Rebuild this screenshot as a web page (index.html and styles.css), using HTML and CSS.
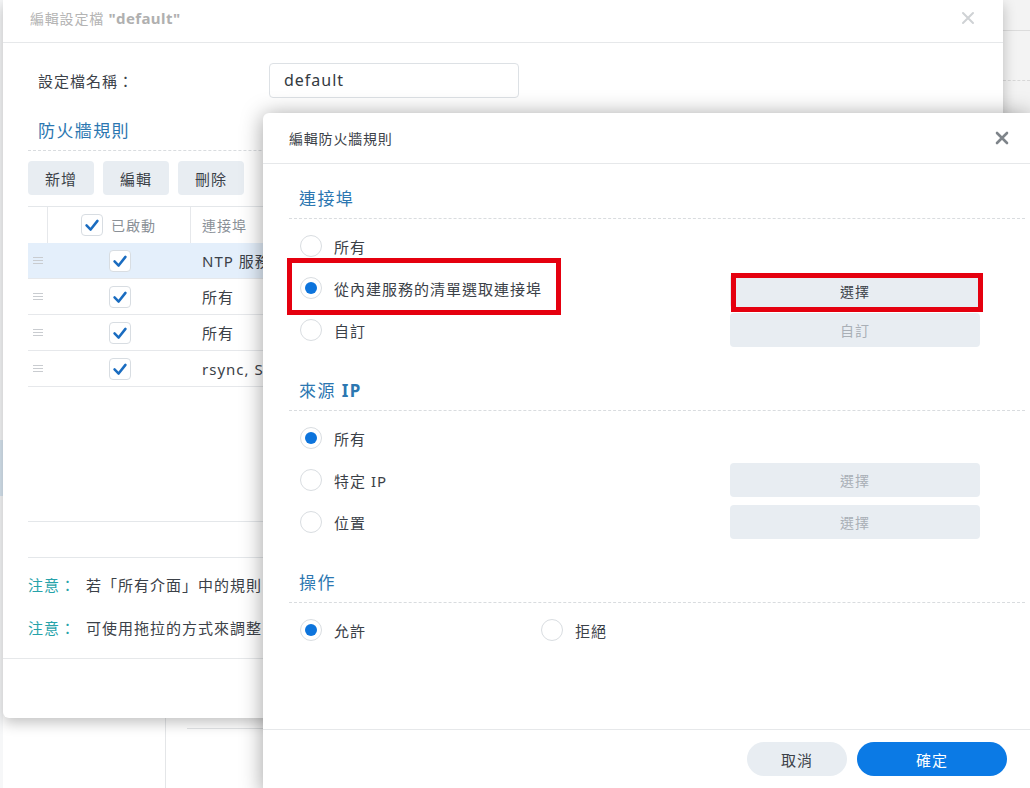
FILE: index.html
```html
<!DOCTYPE html>
<html lang="zh-Hant">
<head>
<meta charset="utf-8">
<title>編輯防火牆規則</title>
<link rel="stylesheet" href="styles.css">
</head>
<body>
<div class="desktop">
  <div class="bg-edge-left"><span class="bg-tint"></span></div>
  <div class="bg-edge-right"><span class="bg-line"></span><span class="bg-dash"></span></div>
  <div class="bg-lower"><span class="bg-hline"></span></div>

  <section class="dlg back">
    <header class="dlg-head back-head">
      <div class="back-title">編輯設定檔 <b>"default"</b></div>
      <svg class="x-icon light" viewBox="0 0 14 14" width="14" height="14"><path d="M2 2 L12 12 M12 2 L2 12"/></svg>
    </header>
    <div class="back-body">
      <div class="form-row">
        <label class="form-label">設定檔名稱：</label>
        <div class="text-input">default</div>
      </div>
      <div class="sec-title">防火牆規則</div>
      <div class="toolbar">
        <button class="tool-btn">新增</button>
        <button class="tool-btn">編輯</button>
        <button class="tool-btn">刪除</button>
      </div>
      <div class="grid">
        <div class="grid-row grid-head">
          <div class="c-drag"></div>
          <div class="c-check head-check"><span class="cb"><svg viewBox="0 0 22 22"><path d="M5 11.5 L9.5 16 L17 6.5"/></svg></span><span>已啟動</span></div>
          <div class="c-port">連接埠</div>
        </div>
        <div class="grid-row sel">
          <div class="c-drag"><span class="handle"></span></div>
          <div class="c-check"><span class="cb"><svg viewBox="0 0 22 22"><path d="M5 11.5 L9.5 16 L17 6.5"/></svg></span></div>
          <div class="c-port">NTP 服務</div>
        </div>
        <div class="grid-row">
          <div class="c-drag"><span class="handle"></span></div>
          <div class="c-check"><span class="cb"><svg viewBox="0 0 22 22"><path d="M5 11.5 L9.5 16 L17 6.5"/></svg></span></div>
          <div class="c-port">所有</div>
        </div>
        <div class="grid-row">
          <div class="c-drag"><span class="handle"></span></div>
          <div class="c-check"><span class="cb"><svg viewBox="0 0 22 22"><path d="M5 11.5 L9.5 16 L17 6.5"/></svg></span></div>
          <div class="c-port">所有</div>
        </div>
        <div class="grid-row">
          <div class="c-drag"><span class="handle"></span></div>
          <div class="c-check"><span class="cb"><svg viewBox="0 0 22 22"><path d="M5 11.5 L9.5 16 L17 6.5"/></svg></span></div>
          <div class="c-port">rsync, SSH</div>
        </div>
      </div>
      <div class="pager"></div>
      <p class="note first"><span class="note-key">注意：</span>若「所有介面」中的規則</p>
      <p class="note"><span class="note-key">注意：</span>可使用拖拉的方式來調整</p>
    </div>
    <footer class="back-foot"></footer>
  </section>

  <section class="dlg front">
    <header class="dlg-head front-head">
      <div class="front-title">編輯防火牆規則</div>
      <svg class="x-icon dark" viewBox="0 0 14 14" width="14" height="14"><path d="M2 2 L12 12 M12 2 L2 12"/></svg>
    </header>
    <div class="front-body">
      <div class="sec-title">連接埠</div>
      <div class="opts">
        <div class="opt-row">
          <label class="radio-label"><span class="radio"></span>所有</label>
        </div>
        <div class="opt-row">
          <label class="radio-label"><span class="radio on"></span>從內建服務的清單選取連接埠</label>
          <button class="wide-btn active nudge">選擇</button>
        </div>
        <div class="opt-row">
          <label class="radio-label"><span class="radio"></span>自訂</label>
          <button class="wide-btn">自訂</button>
        </div>
      </div>

      <div class="sec-title next">來源 <b>IP</b></div>
      <div class="opts">
        <div class="opt-row">
          <label class="radio-label"><span class="radio on"></span>所有</label>
        </div>
        <div class="opt-row">
          <label class="radio-label"><span class="radio"></span>特定 IP</label>
          <button class="wide-btn">選擇</button>
        </div>
        <div class="opt-row">
          <label class="radio-label"><span class="radio"></span>位置</label>
          <button class="wide-btn">選擇</button>
        </div>
      </div>

      <div class="sec-title next">操作</div>
      <div class="opts">
        <div class="opt-row">
          <label class="radio-label short"><span class="radio on"></span>允許</label>
          <label class="radio-label"><span class="radio"></span>拒絕</label>
        </div>
      </div>
    </div>
    <footer class="front-foot">
      <button class="pill cancel">取消</button>
      <button class="pill ok">確定</button>
    </footer>
    <span class="mark mark-radio"></span>
    <span class="mark mark-btn"></span>
  </section>
</div>
</body>
</html>
```

FILE: styles.css
```css
* { box-sizing: border-box; }

html, body {
  margin: 0;
  padding: 0;
}

body {
  width: 1030px;
  height: 788px;
  overflow: hidden;
  background: #ffffff;
  font-family: "Noto Sans", "Noto Sans CJK TC", sans-serif;
  font-size: 15px;
  letter-spacing: 1px;
  color: #3b4148;
}

.desktop {
  position: relative;
  width: 1030px;
  height: 788px;
  overflow: hidden;
  background: #fff;
}

/* background remnants */
.bg-edge-left {
  position: absolute;
  left: 0;
  top: 0;
  width: 3px;
  height: 788px;
  background: #f6f7f8;
}
.bg-tint {
  display: block;
  margin-top: 440px;
  height: 56px;
  background: #d7e5f0;
}
.bg-edge-right {
  position: absolute;
  left: 1003px;
  top: 0;
  width: 27px;
  height: 120px;
  background: #f3f3f3;
}
.bg-line {
  display: block;
  margin-top: 30px;
  border-top: 1px solid #dcdcdc;
}
.bg-dash {
  display: block;
  margin-top: 49px;
  border-top: 1px dashed #d8d8d8;
}
.bg-lower {
  position: absolute;
  left: 165px;
  top: 700px;
  width: 200px;
  height: 100px;
  border-left: 1px solid #e4e6e8;
  padding: 28px 0 0 21px;
}
.bg-hline {
  display: block;
  border-top: 1px solid #e2e4e6;
}

/* dialogs */
.dlg {
  position: absolute;
  background: #fff;
  display: flex;
  flex-direction: column;
}

.back {
  left: 3px;
  top: 0;
  width: 1000px;
  height: 718px;
  border-radius: 0 0 6px 6px;
  box-shadow: 0 5px 14px rgba(0, 0, 0, 0.24);
}

.dlg-head {
  display: flex;
  align-items: center;
  justify-content: space-between;
  border-bottom: 1px solid #e6e8ea;
  flex: none;
}

.back-head {
  height: 43px;
  padding: 0 28px 0 27px;
}
.back-title {
  font-size: 14px;
  letter-spacing: 0.8px;
  color: #b4b4b4;
  margin-top: -6px;
}
.back-title b {
  font-weight: 700;
  font-size: 15px;
  letter-spacing: 0.4px;
  color: #b0b0b0;
}

.x-icon path {
  fill: none;
  stroke-linecap: round;
}
.x-icon.light path {
  stroke: #cfd2d5;
  stroke-width: 2;
}
.x-icon.dark path {
  stroke: #7e848a;
  stroke-width: 2.6;
}
.back-head .x-icon {
  margin-top: -6px;
}

.back-body {
  flex: 1;
  padding: 20px 0 0 25px;
  overflow: hidden;
}

.form-row {
  display: flex;
  align-items: center;
  height: 35px;
  padding-left: 10px;
}
.form-label {
  width: 231px;
  color: #3b4148;
}
.text-input {
  width: 250px;
  height: 35px;
  border: 1px solid #dde1e5;
  border-radius: 4px;
  padding: 0 14px;
  line-height: 33px;
  font-size: 16px;
  color: #333a41;
}

.sec-title {
  padding: 20px 0 6px 10px;
  line-height: 26px;
  font-size: 17px;
  letter-spacing: 1.4px;
  color: #2c77b1;
  border-bottom: 1px dashed #d9dcdf;
}
.sec-title b {
  font-weight: 700;
}

.toolbar {
  display: flex;
  gap: 9px;
  margin-top: 10px;
}
.tool-btn {
  width: 66px;
  height: 34px;
  border: none;
  border-radius: 4px;
  background: #e8edf2;
  font: inherit;
  letter-spacing: 1px;
  color: #3b4148;
  padding: 0;
}

.grid {
  margin-top: 11px;
  height: 316px;
  border-top: 1px solid #e4e7ea;
  border-bottom: 1px solid #e4e7ea;
}
.grid-row {
  display: flex;
  align-items: center;
  height: 36px;
  border-bottom: 1px solid #e6e8eb;
}
.grid-head {
  height: 36px;
  border-bottom: none;
  color: #8a9097;
  font-size: 14px;
}
.grid-row.sel {
  background: #e4effb;
}
.c-drag {
  width: 20px;
  height: 100%;
  display: flex;
  align-items: center;
  justify-content: center;
}
.c-check {
  width: 143px;
  height: 100%;
  display: flex;
  align-items: center;
  justify-content: center;
}
.grid-head .c-drag {
  border-right: 1px solid #e6e8eb;
}
.grid-head .c-check {
  border-right: 1px solid #e6e8eb;
  justify-content: flex-start;
  padding-left: 33px;
  gap: 8px;
}
.c-port {
  padding-left: 11px;
  white-space: nowrap;
}

.handle {
  display: block;
  width: 10px;
  height: 7px;
  border-top: 1px solid #c9ccd0;
  border-bottom: 1px solid #c9ccd0;
  position: relative;
}
.handle::after {
  content: "";
  position: absolute;
  left: 0;
  right: 0;
  top: 2px;
  border-top: 1px solid #c9ccd0;
}

.cb {
  width: 22px;
  height: 22px;
  border: 1px solid #d8dde2;
  border-radius: 4px;
  background: #fff;
  display: inline-flex;
}
.cb svg {
  width: 20px;
  height: 20px;
}
.cb path {
  fill: none;
  stroke: #1a6cc0;
  stroke-width: 2.8;
  stroke-linecap: round;
  stroke-linejoin: round;
}

.pager {
  height: 36px;
  border-bottom: 1px solid #e4e7ea;
}

.note {
  margin: 16px 0 0;
  line-height: 22px;
  white-space: nowrap;
  color: #3b4148;
}
.note + .note {
  margin-top: 21px;
}
.note-key {
  color: #27a3aa;
  margin-right: 10px;
}

.back-foot {
  flex: none;
  height: 60px;
  border-top: 1px solid #e6e8ea;
}

/* front dialog */
.front {
  left: 263px;
  top: 113px;
  width: 767px;
  height: 680px;
  border-radius: 6px 0 0 0;
  box-shadow: 0 2px 22px rgba(0, 0, 0, 0.38);
}

.front-head {
  height: 51px;
  padding: 0 21px 0 26px;
}
.front-title {
  font-size: 14px;
  letter-spacing: 0.8px;
  color: #3b4148;
}

.front-body {
  flex: 1;
  padding: 0 5px 0 26px;
}
.front-body .sec-title {
  padding-top: 22px;
}
.front-body .sec-title.next {
  padding-top: 27px;
}

.opts {
  padding: 6px 0 0 11px;
}
.opt-row {
  display: flex;
  align-items: center;
  height: 42px;
}
.radio-label {
  display: flex;
  align-items: center;
  gap: 12px;
  width: 430px;
  white-space: nowrap;
}
.radio-label.short {
  width: 241px;
}
.radio {
  width: 22px;
  height: 22px;
  border-radius: 50%;
  border: 1px solid #d9dde1;
  background: #fff;
  display: inline-flex;
  align-items: center;
  justify-content: center;
  flex: none;
}
.radio.on::after {
  content: "";
  width: 12px;
  height: 12px;
  border-radius: 50%;
  background: #0d74dc;
}

.wide-btn {
  width: 250px;
  height: 34px;
  border: none;
  border-radius: 4px;
  background: #e8edf2;
  font: inherit;
  font-size: 14px;
  letter-spacing: 1px;
  color: #a9afb6;
  padding: 0;
}
.wide-btn.active {
  color: #3b4148;
}
.wide-btn.nudge {
  margin-top: 6px;
}

.front-foot {
  flex: none;
  height: 64px;
  border-top: 1px solid #e6e8ea;
  display: flex;
  justify-content: flex-end;
  align-items: flex-start;
  gap: 10px;
  padding: 12px 23px 0 0;
}
.pill {
  height: 34px;
  border: none;
  border-radius: 17px;
  font: inherit;
  letter-spacing: 1px;
  padding: 0;
}
.pill.cancel {
  width: 100px;
  background: #e8edf2;
  color: #3b4148;
}
.pill.ok {
  width: 150px;
  background: #0b7ae5;
  color: #fff;
}

/* annotation boxes */
.mark {
  position: absolute;
  border: 5px solid #e5000f;
  pointer-events: none;
}
.mark-radio {
  left: 24px;
  top: 145px;
  width: 274px;
  height: 57px;
}
.mark-btn {
  left: 468px;
  top: 160px;
  width: 252px;
  height: 39px;
}
```
